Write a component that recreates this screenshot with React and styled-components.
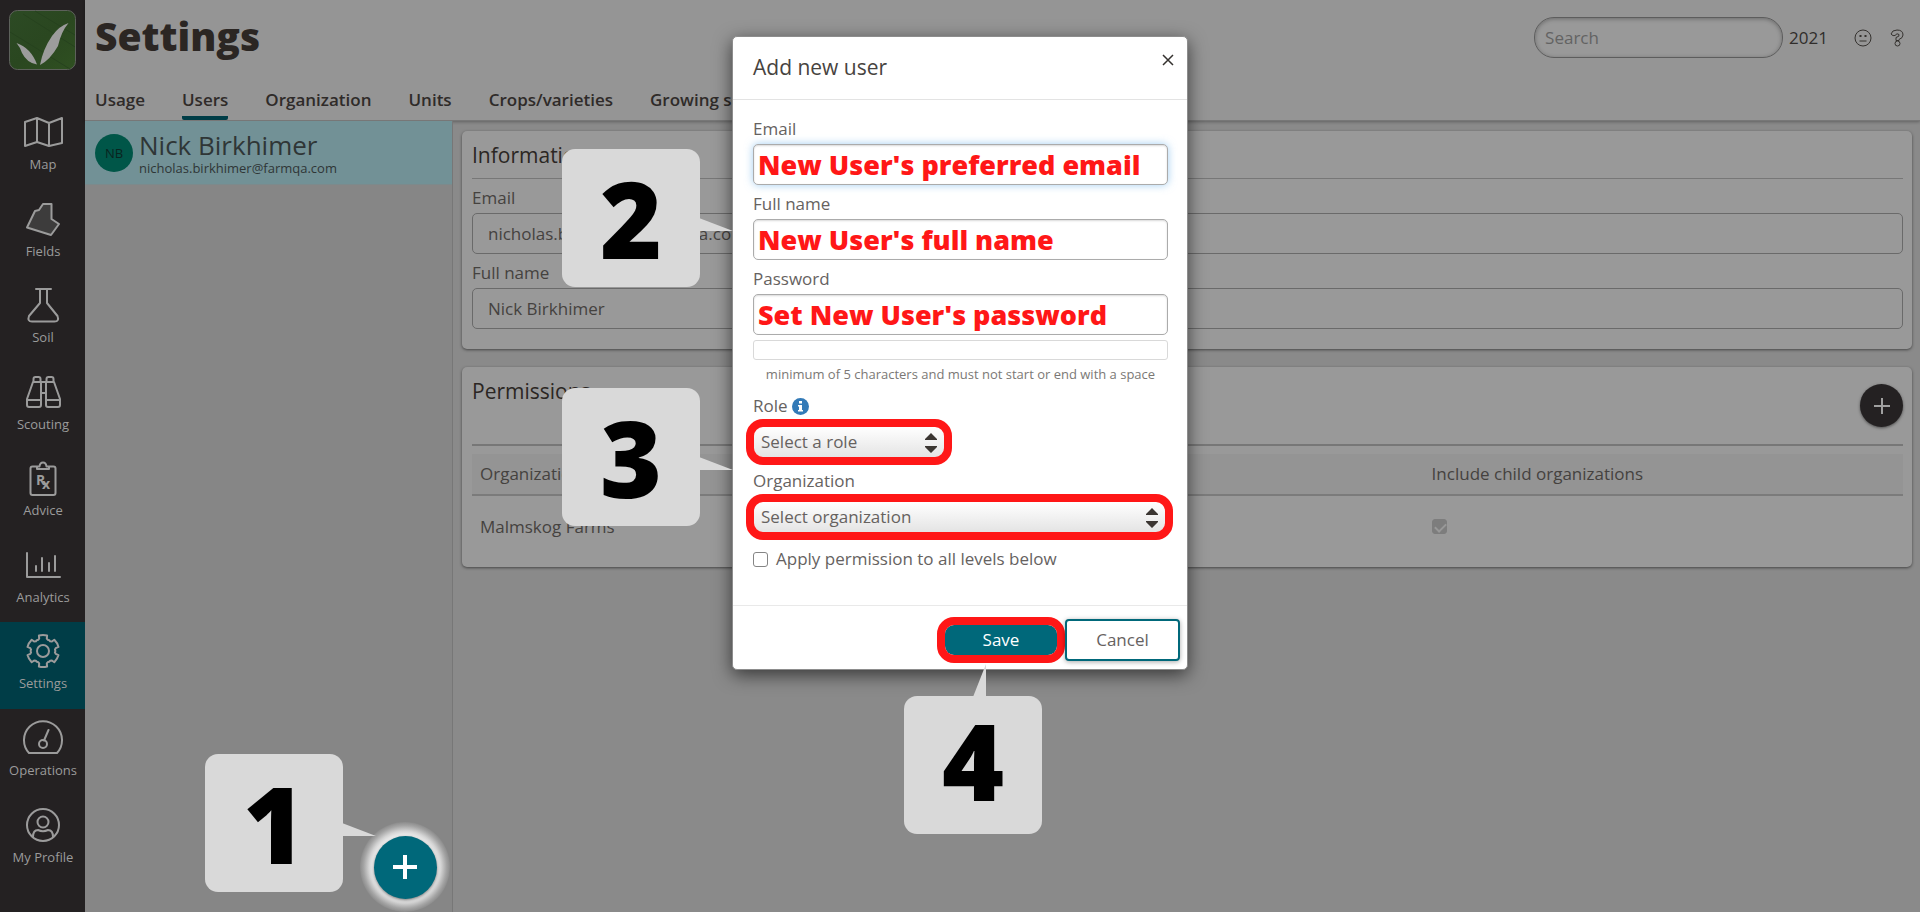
import React from "react";
import styled, { createGlobalStyle, css } from "styled-components";

const RED = "#ff1717";
const TEAL = "#00687a";

const GlobalStyle = createGlobalStyle`
  * { box-sizing: border-box; }
  body {
    margin: 0;
    background: #868686;
    color: #45423f;
    font-family: "Open Sans", "Noto Sans", sans-serif;
    font-size: 17px;
    line-height: 24px;
  }
  button, input, select { font: inherit; color: inherit; margin: 0; }
`;

const Page = styled.div`
  display: flex;
  min-height: 100vh;
`;

/* ---------- side navigation ---------- */

const Sidebar = styled.nav`
  display: flex;
  flex-direction: column;
  flex: none;
  width: 85px;
  padding: 10px 0 30px;
  background: #242122;
`;

const Logo = styled.svg`
  flex: none;
  display: block;
  width: 67px;
  height: 60px;
  margin: 0 auto 33px;
`;

const NavLink = styled.a`
  display: flex;
  flex: 1;
  flex-direction: column;
  align-items: center;
  gap: 2px;
  min-height: 80px;
  padding: 9px 0 0 1px;
  background: ${(p) => (p.$active ? "#003d47" : "transparent")};
  color: #9b9b9b;
  font-size: 13px;
  font-weight: 500;
  line-height: 20px;
  text-decoration: none;
  white-space: nowrap;
`;

const NavIcon = styled.svg`
  flex: none;
  width: 40px;
  height: 40px;
  fill: none;
  stroke: #9b9b9b;
  stroke-width: 2;
  stroke-linecap: round;
  stroke-linejoin: round;
`;

function gearPath() {
  const point = (radius, degrees) => {
    const a = (degrees * Math.PI) / 180;
    return `${(20 + radius * Math.cos(a)).toFixed(1)} ${(20 + radius * Math.sin(a)).toFixed(1)}`;
  };
  let d = "";
  for (let i = 0; i < 6; i += 1) {
    const a = -90 + i * 60;
    d += `${i ? "L" : "M"}${point(12, a - 24)} L${point(13, a - 17)} L${point(16, a - 15)}`;
    d += ` A16 16 0 0 1 ${point(16, a + 15)} L${point(13, a + 17)} L${point(12, a + 24)}`;
    d += ` Q${point(13, a + 30)} ${point(12, a + 36)} `;
  }
  return `${d}Z`;
}

const navItems = [
  { label: "Map", icon: <path d="M2 10 14 6l12 5 13-5v25l-13 3-12-4-12 4ZM14 6v24M26 11v23" /> },
  { label: "Fields", icon: <path fill="#3d3c3c" d="M20 5h8.500v15l7.500 5-8 11L4 28.500 12 12l4-1Z" /> },
  {
    label: "Soil",
    icon: <path d="M13 4h15M17 4v14L6 31q-2 5.500 3 5.500h22.500q5 0 3-5.500L24 18V4" />,
  },
  {
    label: "Scouting",
    icon: (
      <path d="M10.500 10V7q0-2 2-2h3q2 0 2 2v3M23.500 10V7q0-2 2-2h3q2 0 2 2v3M10 10h8v23q0 2-2 2H6q-2 0-2-2v-6ZM31 10h-8v23q0 2 2 2h10q2 0 2-2v-6ZM4 28h14M23 28h14M18 21h5M18 10h5" />
    ),
  },
  {
    label: "Advice",
    icon: (
      <>
        <path d="M14 8.500h-4.500q-2 0-2 2V35q0 2 2 2h21q2 0 2-2V10.500q0-2-2-2H26M14 8.500v2.500h12V8.500h-2.500q-.5-4-3.500-4t-3.500 4Z" />
        <text x="13" y="27" fill="#9b9b9b" stroke="none" fontSize="14" fontWeight="700">R</text>
        <text x="19" y="31" fill="#9b9b9b" stroke="none" fontSize="14" fontWeight="700">x</text>
      </>
    ),
  },
  { label: "Analytics", icon: <path d="M4 8v24h33M13 21v5M19 13v13M26 18v8M32 11v15" /> },
  {
    label: "Settings",
    active: true,
    icon: (
      <>
        <path d={gearPath()} />
        <circle cx="20" cy="20" r="6" />
      </>
    ),
  },
  {
    label: "Operations",
    icon: (
      <>
        <path d="M6 35A19 19 0 1 1 34 35ZM21 22.500 25.500 12" />
        <circle cx="20" cy="26" r="4" />
      </>
    ),
  },
  {
    label: "My Profile",
    icon: (
      <>
        <circle cx="20" cy="20" r="16" />
        <circle cx="20" cy="17" r="5.500" />
        <path d="M10 32q0-7 5-7 5 2.500 10 0 5 0 5 7" />
      </>
    ),
  },
];

/* ---------- header ---------- */

const Main = styled.div`
  display: flex;
  flex: 1;
  flex-direction: column;
  min-width: 0;
`;

const Header = styled.header`
  position: relative;
  display: flex;
  flex-direction: column;
  justify-content: space-between;
  height: 121px;
  padding: 9px 16px 0 10px;
  border-bottom: 1px solid #777;
  background: #959595;
  box-shadow: 0 1px 3px rgba(0, 0, 0, 0.3);
`;

const HeaderRow = styled.div`
  display: flex;
  align-items: flex-start;
  justify-content: space-between;
`;

const Title = styled.h1`
  margin: 0;
  color: #2b2623;
  font-size: 39px;
  font-weight: 800;
  line-height: 54px;
`;

const Tools = styled.div`
  display: flex;
  align-items: center;
  gap: 6px;
  padding-top: 8px;
`;

const SearchBox = styled.input`
  width: 249px;
  height: 41px;
  padding: 0 10px;
  border: 1px solid #5d5d5d;
  border-radius: 20px;
  background: #999;
  box-shadow: inset 0 1px 4px rgba(0, 0, 0, 0.3);
  &::placeholder { color: #636363; opacity: 1; }
`;

const YearLink = styled.a`
  margin-right: 20px;
  color: #302d2b;
  text-decoration: none;
`;

const IconButton = styled.button`
  display: flex;
  padding: 0;
  border: 0;
  background: none;
  margin-left: ${(p) => (p.$spaced ? "12px" : "0")};
  svg { fill: none; stroke: #35322f; stroke-width: ${(p) => p.$weight || 1}; stroke-linejoin: round; }
`;

const Tabs = styled.nav`
  display: flex;
  gap: 37px;
`;

const Tab = styled.a`
  padding-bottom: 4px;
  border-bottom: 4px solid ${(p) => (p.$active ? "#003d47" : "transparent")};
  border-radius: 2px;
  color: #2f2b29;
  font-weight: 600;
  text-decoration: none;
  white-space: nowrap;
`;

/* ---------- body ---------- */

const Body = styled.div`
  display: flex;
  flex: 1;
`;

const UserList = styled.aside`
  position: relative;
  display: flex;
  flex: none;
  flex-direction: column;
  width: 368px;
  border-right: 1px solid #777;
`;

const UserRow = styled.a`
  display: flex;
  align-items: center;
  gap: 6px;
  height: 64px;
  padding-left: 10px;
  border-bottom: 1px solid #7c8a8c;
  background: #729196;
  color: #2f3636;
  text-decoration: none;
`;

const Avatar = styled.span`
  width: 38px;
  height: 38px;
  border-radius: 50%;
  background: #005648;
  color: #0a2420;
  font-size: 13px;
  line-height: 38px;
  text-align: center;
`;

const UserText = styled.span`
  display: flex;
  flex-direction: column;
`;

const UserName = styled.span`
  font-size: 26px;
  line-height: 30px;
`;

const UserEmail = styled.span`
  font-size: 13px;
  line-height: 16px;
`;

const Halo = styled.div`
  position: relative;
  display: flex;
  align-items: center;
  justify-content: center;
  width: 90px;
  height: 90px;
  margin: auto 2px 0 auto;
  border-radius: 50%;
  background: radial-gradient(closest-side, #f4f4f4 68%, #d4d4d4 80%, #a4a4a4 92%, #8c8c8c 100%);
`;

const RoundButton = styled.button`
  display: flex;
  flex: none;
  align-items: center;
  justify-content: center;
  width: ${(p) => p.$size}px;
  height: ${(p) => p.$size}px;
  padding: 0;
  border: 0;
  border-radius: 50%;
  background: ${(p) => (p.$dark ? "#242122" : TEAL)};
  color: ${(p) => (p.$dark ? "#a0a0a0" : "#fff")};
  box-shadow: 0 1px 3px rgba(0, 0, 0, 0.5);
  svg { stroke: currentColor; fill: none; }
`;

const Content = styled.main`
  display: flex;
  flex: 1;
  flex-direction: column;
  gap: 18px;
  min-width: 0;
  padding: 10px 8px 10px 9px;
  background: #8a8a8a;
`;

const Card = styled.section`
  display: flex;
  flex-direction: column;
  padding: 9px 9px ${(p) => (p.$compact ? "10px" : "20px")} 10px;
  border-radius: 5px;
  background: #999;
  box-shadow: 0 1px 3px rgba(0, 0, 0, 0.5);
`;

const CardHeader = styled.div`
  display: flex;
  align-items: flex-start;
  justify-content: space-between;
  min-height: ${(p) => (p.$tall ? "70px" : "39px")};
  border-bottom: ${(p) => (p.$tall ? 2 : 1)}px solid #777;
`;

const CardTitle = styled.h2`
  margin: 0;
  color: #2b2623;
  font-size: 21px;
  font-weight: 500;
  line-height: 30px;
`;

const AddSlot = styled.div`
  padding-top: 8px;
`;

const Table = styled.table`
  width: 100%;
  margin-top: 8px;
  border-collapse: collapse;
  table-layout: fixed;
`;

const HeadCell = styled.th`
  width: ${(p) => p.$width};
  height: 41px;
  padding: 0 8px;
  border-bottom: 2px solid #7b7b7b;
  background: #949494;
  font-weight: 400;
  text-align: left;
`;

const Cell = styled.td`
  height: 62px;
  padding: 0 8px;
`;

/* ---------- form pieces ---------- */

const Field = styled.div`
  display: flex;
  flex-direction: column;
`;

const Label = styled.label`
  display: flex;
  align-items: center;
  gap: 4px;
  height: 34px;
  padding-bottom: 4px;
  padding-top: 8px;
`;

const TextInput = styled.input`
  width: 100%;
  height: 41px;
  padding: 0 15px;
  border: 1px solid #6a6a6a;
  border-radius: 5px;
  background: #999;
`;

const NoteInput = styled(TextInput)`
  padding: 0 4px;
  border-color: #ababab;
  background: #fff;
  color: ${RED};
  font-size: 27px;
  font-weight: 800;
  box-shadow: inset 0 1px 2px rgba(0, 0, 0, 0.15)
    ${(p) => p.$focused && css`, 0 0 9px rgba(102, 175, 233, 0.6)`};
`;

const CheckBox = styled.input`
  appearance: none;
  position: relative;
  flex: none;
  display: block;
  width: 15px;
  height: 15px;
  border: 1px solid #858585;
  border-radius: 3px;
  background: #fff;
  &:checked {
    border-color: #7d7d7d;
    background: #7d7d7d;
  }
  &:checked::after {
    content: "";
    position: absolute;
    left: 4px;
    top: 1px;
    width: 5px;
    height: 9px;
    border: solid #999;
    border-width: 0 2px 2px 0;
    transform: rotate(45deg);
  }
`;

/* ---------- dialog ---------- */

const Overlay = styled.div`
  position: absolute;
  inset: 0;
  display: flex;
  align-items: flex-start;
  justify-content: center;
  padding-top: 36px;
`;

const Dialog = styled.section`
  position: relative;
  display: flex;
  flex-direction: column;
  width: 456px;
  border: 1px solid #8d8d8d;
  border-radius: 5px;
  background: #fff;
  color: #66625f;
  box-shadow: 0 5px 18px rgba(0, 0, 0, 0.6);
`;

const DialogHeader = styled.div`
  display: flex;
  align-items: flex-start;
  justify-content: space-between;
  height: 63px;
  padding: 15px 13px 0 20px;
  border-bottom: 1px solid #e3e3e3;
`;

const DialogTitle = styled.h2`
  margin: 0;
  color: #474340;
  font-size: 21px;
  font-weight: 500;
  line-height: 30px;
`;

const DialogBody = styled.div`
  display: flex;
  flex-direction: column;
  height: 505px;
  padding: 10px 19px 0 20px;
`;

const Strength = styled.div`
  height: 20px;
  margin-top: 5px;
  border: 1px solid #d9d9d9;
  border-radius: 3px;
`;

const Hint = styled.p`
  margin: 4px 0 3px;
  color: #7b7875;
  font-size: 13px;
  font-weight: 500;
  line-height: 20px;
  text-align: center;
  white-space: nowrap;
`;

const SelectBox = styled.div`
  position: relative;
  align-self: flex-start;
  width: ${(p) => p.$width};
  height: 30px;
  margin: 6px 0 5px 1px;
  svg { position: absolute; right: 7px; top: 6px; pointer-events: none; fill: #3b3632; }
`;

const Select = styled.select`
  appearance: none;
  display: block;
  width: 100%;
  height: 30px;
  padding: 0 7px;
  border: 0;
  border-radius: 9px;
  outline: 8px solid ${RED};
  background: linear-gradient(#fff, #e4e4e4);
`;

const CheckLabel = styled.label`
  display: flex;
  align-items: center;
  gap: 8px;
  margin-top: 10px;
`;

const DialogFooter = styled.div`
  display: flex;
  align-items: center;
  justify-content: flex-end;
  gap: 8px;
  height: 64px;
  padding: 4px 7px 0;
  border-top: 1px solid #e9e9e9;
`;

const SaveButton = styled.button`
  width: 112px;
  height: 30px;
  padding: 0;
  border: 0;
  border-radius: 9px;
  outline: 8px solid ${RED};
  background: ${TEAL};
  color: #fff;
  font-weight: 500;
`;

const CancelButton = styled.button`
  width: 115px;
  height: 42px;
  padding: 0;
  border: 2px solid ${TEAL};
  border-radius: 4px;
  background: #fff;
  box-shadow: 0 1px 5px rgba(0, 0, 0, 0.35);
`;

/* ---------- numbered callouts ---------- */

const CalloutBox = styled.div`
  position: absolute;
  left: ${(p) => p.$left}px;
  top: ${(p) => p.$top}px;
  width: 138px;
  height: 138px;
  border-radius: 13px;
  background: #d9d9d9;
  color: #000;
  font-size: 106px;
  font-weight: 800;
  line-height: ${(p) => (p.$up ? "128px" : "138px")};
  text-align: center;
  svg { position: absolute; fill: #d9d9d9; }
`;

const TailRight = styled.svg`
  left: 137px;
  top: 69px;
`;

const TailUp = styled.svg`
  left: 69px;
  bottom: 137px;
`;

function Callout({ number, left, top, up }) {
  return (
    <CalloutBox $left={left} $top={top} $up={up}>
      {number}
      {up ? (
        <TailUp width="13" height="33"><path d="M13 0v33H0Z" /></TailUp>
      ) : (
        <TailRight width="34" height="13"><path d="M0 0 34 13H0Z" /></TailRight>
      )}
    </CalloutBox>
  );
}

function Plus({ size, weight }) {
  return (
    <svg width={size} height={size} viewBox="0 0 24 24" strokeWidth={weight} aria-hidden="true">
      <path d="M12 0v24M0 12h24" />
    </svg>
  );
}

function PickerArrows() {
  return (
    <svg width="12" height="20" viewBox="0 0 12 20" aria-hidden="true">
      <path d="M6 0 12 6V7H0V6ZM6 20 12 14V13H0V14Z" />
    </svg>
  );
}

const tabs = ["Usage", "Users", "Organization", "Units", "Crops/varieties", "Growing seasons"];

export default function App() {
  return (
    <>
      <GlobalStyle />
      <Page>
        <Sidebar>
          <Logo viewBox="0 0 67 60" role="img" aria-label="FarmQA">
            <defs>
              <linearGradient id="field" x1="0" y1="0" x2="1" y2="1">
                <stop offset="0" stopColor="#2c4a24" />
                <stop offset="0.5" stopColor="#2a4720" />
                <stop offset="1" stopColor="#2f5021" />
              </linearGradient>
            </defs>
            <rect x="0.5" y="0.5" width="66" height="59" rx="8" fill="url(#field)" stroke="#5d615b" />
            <path d="M26 1 66 25M14 4l52 33M1 22l60 37" stroke="#26421e" fill="none" />
            <path d="M7.500 33Q22 38 28 54.500Q18 53 13 43Q11 37 7.500 33ZM59.500 13Q50 16 43 26Q34 39 31 55Q41 50 49 36Q52 22 59.500 13Z" fill="#9c9c9c" />
          </Logo>
          {navItems.map((item) => (
            <NavLink key={item.label} href={`#${item.label}`} $active={item.active}>
              <NavIcon viewBox="0 0 40 40" aria-hidden="true">{item.icon}</NavIcon>
              {item.label}
            </NavLink>
          ))}
        </Sidebar>

        <Main>
          <Header>
            <HeaderRow>
              <Title>Settings</Title>
              <Tools>
                <SearchBox type="search" placeholder="Search" aria-label="Search" />
                <YearLink href="#year">2021</YearLink>
                <IconButton aria-label="Feedback">
                  <svg width="18" height="18" viewBox="0 0 18 18">
                    <circle cx="9" cy="9" r="8" />
                    <path d="M5.500 7h2M10.500 7h2" strokeWidth="2" />
                    <path d="M5.500 12h7" />
                  </svg>
                </IconButton>
                <IconButton aria-label="Help" $spaced>
                  <svg width="14" height="18" viewBox="0 0 14 18">
                    <path d="M1 5Q2 1 7 1q6 0 6 5 0 3-4 4.500v1H6V8.500Q10 7.500 9 5.500 7 3.500 5 6.500 3 7.500 1 5Z" />
                    <circle cx="7.500" cy="14.500" r="2.500" />
                  </svg>
                </IconButton>
              </Tools>
            </HeaderRow>
            <Tabs>
              {tabs.map((tab) => (
                <Tab key={tab} href={`#${tab}`} $active={tab === "Users"}>{tab}</Tab>
              ))}
            </Tabs>
          </Header>

          <Body>
            <UserList>
              <UserRow href="#nick">
                <Avatar>NB</Avatar>
                <UserText>
                  <UserName>Nick Birkhimer</UserName>
                  <UserEmail>nicholas.birkhimer@farmqa.com</UserEmail>
                </UserText>
              </UserRow>
              <Halo>
                <RoundButton $size={63} aria-label="Add user"><Plus size={24} weight={4} /></RoundButton>
                <Callout number="1" left={-155} top={-68} />
              </Halo>
            </UserList>

            <Content>
              <Card>
                <CardHeader><CardTitle>Information</CardTitle></CardHeader>
                <Field>
                  <Label htmlFor="info-email">Email</Label>
                  <TextInput id="info-email" defaultValue="nicholas.birkhimer@farmqa.com" />
                </Field>
                <Field>
                  <Label htmlFor="info-name">Full name</Label>
                  <TextInput id="info-name" defaultValue="Nick Birkhimer" />
                </Field>
              </Card>

              <Card $compact>
                <CardHeader $tall>
                  <CardTitle>Permissions</CardTitle>
                  <AddSlot>
                    <RoundButton $size={43} $dark aria-label="Add permission"><Plus size={16} weight={3} /></RoundButton>
                  </AddSlot>
                </CardHeader>
                <Table>
                  <thead>
                    <tr>
                      <HeadCell $width="66.5%">Organization</HeadCell>
                      <HeadCell>Include child organizations</HeadCell>
                    </tr>
                  </thead>
                  <tbody>
                    <tr>
                      <Cell>Malmskog Farms</Cell>
                      <Cell><CheckBox type="checkbox" defaultChecked disabled aria-label="Include child organizations" /></Cell>
                    </tr>
                  </tbody>
                </Table>
              </Card>
            </Content>
          </Body>
        </Main>
      </Page>

      <Overlay>
        <Dialog role="dialog" aria-label="Add new user">
          <DialogHeader>
            <DialogTitle>Add new user</DialogTitle>
            <IconButton aria-label="Close" $weight={1.5}>
              <svg width="12" height="16" viewBox="0 0 12 16"><path d="M1 3l10 10M11 3 1 13" /></svg>
            </IconButton>
          </DialogHeader>
          <DialogBody>
            <Field>
              <Label htmlFor="new-email">Email</Label>
              <NoteInput id="new-email" $focused defaultValue="New User's preferred email" />
            </Field>
            <Field>
              <Label htmlFor="new-name">Full name</Label>
              <NoteInput id="new-name" defaultValue="New User's full name" />
            </Field>
            <Field>
              <Label htmlFor="new-password">Password</Label>
              <NoteInput id="new-password" defaultValue="Set New User's password" />
            </Field>
            <Strength />
            <Hint>minimum of 5 characters and must not start or end with a space</Hint>
            <Field>
              <Label htmlFor="role">
                Role
                <svg width="17" height="17" viewBox="0 0 17 17" aria-hidden="true">
                  <circle cx="8.500" cy="8.500" r="8.500" fill="#337ab7" />
                  <path d="M7 3h3v2.500H7ZM6 7h4v5h1v1.500H6V12h1V8.500H6Z" fill="#fff" />
                </svg>
              </Label>
              <SelectBox $width="190px">
                <Select id="role"><option>Select a role</option></Select>
                <PickerArrows />
              </SelectBox>
            </Field>
            <Field>
              <Label htmlFor="organization">Organization</Label>
              <SelectBox $width="411px">
                <Select id="organization"><option>Select organization</option></Select>
                <PickerArrows />
              </SelectBox>
            </Field>
            <CheckLabel>
              <CheckBox type="checkbox" />
              Apply permission to all levels below
            </CheckLabel>
          </DialogBody>
          <DialogFooter>
            <SaveButton type="button">Save</SaveButton>
            <CancelButton type="button">Cancel</CancelButton>
          </DialogFooter>
          <Callout number="2" left={-171} top={112} />
          <Callout number="3" left={-171} top={351} />
          <Callout number="4" left={171} top={659} up />
        </Dialog>
      </Overlay>
    </>
  );
}
